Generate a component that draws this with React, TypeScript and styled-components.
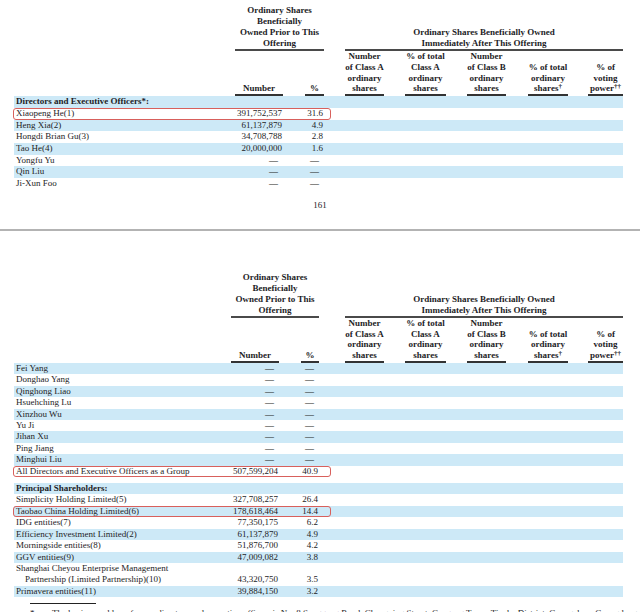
import React from 'react';
import styled, {createGlobalStyle} from 'styled-components';

const GlobalStyle = createGlobalStyle`
    html, body {
        margin: 0;
        padding: 0;
        background: #fff;
    }
    body {
        font-family: "Liberation Serif", "Times New Roman", serif;
        color: #1d1d26;
    }
`;

const Page = styled.div`
    width: 640px;
    height: 612px;
    overflow: hidden;
    display: flex;
    flex-direction: column;
`;

const Sheet = styled.section<{ $padTop: number }>`
    padding: ${({$padTop}) => $padTop}px 0 0 14px;
`;

const Table = styled.table`
    width: 609px;
    table-layout: fixed;
    border-collapse: separate;
    border-spacing: 0;
    font-size: 9px;
`;

const GroupHead = styled.th`
    font-weight: bold;
    text-align: center;
    vertical-align: bottom;
    line-height: 11px;
    padding: 0;
    white-space: nowrap;
    border-bottom: 2px solid #4a4a4a;
`;

const ColHead = styled.th<{ $underline?: boolean }>`
    font-weight: bold;
    text-align: center;
    vertical-align: bottom;
    line-height: 10.8px;
    padding: 0;
    white-space: nowrap;
    border-bottom: ${({$underline}) => ($underline ? '2px solid #333' : '2px solid transparent')};
`;

const Dagger = styled.sup`
    font-size: 7px;
    line-height: 0;
    vertical-align: 3px;
`;

const Row = styled.tr<{ $shade?: boolean; $h: number }>`
    background: ${({$shade}) => ($shade ? '#cde9f7' : 'transparent')};
    line-height: ${({$h}) => $h}px;
`;

const Spacer = styled.tr`
    height: 6px;
`;

const Name = styled.td<{ $bold?: boolean }>`
    position: relative;
    padding: 0 0 0 2px;
    font-weight: ${({$bold}) => ($bold ? 'bold' : 'normal')};
    white-space: nowrap;
    vertical-align: bottom;
`;

const Indent = styled.span`
    padding-left: 9px;
`;

const Num = styled.td<{ $dash?: boolean }>`
    padding: 0 ${({$dash}) => ($dash ? 5 : 1)}px 0 0;
    text-align: right;
    white-space: nowrap;
    vertical-align: bottom;
`;

const Cell = styled.td`
    padding: 0;
`;

const Highlight = styled.span`
    position: absolute;
    left: -1px;
    top: 0;
    bottom: 0;
    width: 318px;
    box-sizing: border-box;
    border: 1px solid #d8605c;
    border-radius: 3px;
    pointer-events: none;
`;

const PageNum = styled.div`
    margin-top: 10px;
    text-align: center;
    font-size: 9px;
    line-height: 11px;
`;

const PageBreak = styled.div`
    margin-top: 18px;
    border-top: 2px solid #b3b3b3;
`;

const FootRule = styled.div`
    width: 66px;
    margin: 6px 0 0 16px;
    border-top: 1px solid #222;
`;

const Footnote = styled.p`
    margin: 4px 0 0 16px;
    font-size: 9px;
    line-height: 11px;
    white-space: nowrap;
`;

const Star = styled.span`
    display: inline-block;
    width: 22px;
`;

type Line = {
    name: string;
    second?: string;
    num?: string;
    pct?: string;
    bold?: boolean;
    shade?: boolean;
    box?: boolean;
    spacer?: boolean;
};

const DASH = '\u2014';

const topCols = [218, 3, 48, 22, 19, 21, 39, 21, 41, 21, 39, 22, 40, 20, 35];
const bottomCols = [214, 3, 48, 22, 18, 26, 39, 21, 41, 21, 39, 22, 40, 20, 35];

const topRows: Line[] = [
    {name: 'Directors and Executive Officers*:', bold: true, shade: true},
    {name: 'Xiaopeng He(1)', num: '391,752,537', pct: '31.6', box: true},
    {name: 'Heng Xia(2)', num: '61,137,879', pct: '4.9', shade: true},
    {name: 'Hongdi Brian Gu(3)', num: '34,708,788', pct: '2.8'},
    {name: 'Tao He(4)', num: '20,000,000', pct: '1.6', shade: true},
    {name: 'Yongfu Yu', num: DASH, pct: DASH},
    {name: 'Qin Liu', num: DASH, pct: DASH, shade: true},
    {name: 'Ji-Xun Foo', num: DASH, pct: DASH},
];

const bottomRows: Line[] = [
    {name: 'Fei Yang', num: DASH, pct: DASH, shade: true},
    {name: 'Donghao Yang', num: DASH, pct: DASH},
    {name: 'Qinghong Liao', num: DASH, pct: DASH, shade: true},
    {name: 'Hsuehching Lu', num: DASH, pct: DASH},
    {name: 'Xinzhou Wu', num: DASH, pct: DASH, shade: true},
    {name: 'Yu Ji', num: DASH, pct: DASH},
    {name: 'Jihan Xu', num: DASH, pct: DASH, shade: true},
    {name: 'Ping Jiang', num: DASH, pct: DASH},
    {name: 'Minghui Liu', num: DASH, pct: DASH, shade: true},
    {name: 'All Directors and Executive Officers as a Group', num: '507,599,204', pct: '40.9', box: true},
    {name: '', spacer: true},
    {name: 'Principal Shareholders:', bold: true, shade: true},
    {name: 'Simplicity Holding Limited(5)', num: '327,708,257', pct: '26.4'},
    {name: 'Taobao China Holding Limited(6)', num: '178,618,464', pct: '14.4', shade: true, box: true},
    {name: 'IDG entities(7)', num: '77,350,175', pct: '6.2'},
    {name: 'Efficiency Investment Limited(2)', num: '61,137,879', pct: '4.9', shade: true},
    {name: 'Morningside entities(8)', num: '51,876,700', pct: '4.2'},
    {name: 'GGV entities(9)', num: '47,009,082', pct: '3.8', shade: true},
    {
        name: 'Shanghai Cheyou Enterprise Management',
        second: 'Partnership (Limited Partnership)(10)',
        num: '43,320,750',
        pct: '3.5',
    },
    {name: 'Primavera entities(11)', num: '39,884,150', pct: '3.2', shade: true},
];

const afterHeads = [
    <>Number<br/>of Class A<br/>ordinary<br/>shares</>,
    <>% of total<br/>Class A<br/>ordinary<br/>shares</>,
    <>Number<br/>of Class B<br/>ordinary<br/>shares</>,
    <>% of total<br/>ordinary<br/>shares<Dagger>{'\u2020'}</Dagger></>,
    <>% of<br/>voting<br/>power<Dagger>{'\u2020\u2020'}</Dagger></>,
];

const HoldingsTable: React.FC<{ cols: number[]; rows: Line[]; rowH: number }> = ({cols, rows, rowH}) => (
    <Table>
        <colgroup>
            {cols.map((w, i) => <col key={i} style={{width: w}}/>)}
        </colgroup>
        <thead>
            <tr>
                <Cell colSpan={2}/>
                <GroupHead colSpan={3}>
                    Ordinary Shares<br/>Beneficially<br/>Owned Prior to This<br/>Offering
                </GroupHead>
                <Cell/>
                <GroupHead colSpan={9}>
                    Ordinary Shares Beneficially Owned<br/>Immediately After This Offering
                </GroupHead>
            </tr>
            <tr>
                <Cell colSpan={2}/>
                <ColHead $underline>Number</ColHead>
                <Cell/>
                <ColHead $underline>%</ColHead>
                {afterHeads.map((h, i) => (
                    <React.Fragment key={i}>
                        <Cell/>
                        <ColHead $underline>{h}</ColHead>
                    </React.Fragment>
                ))}
            </tr>
        </thead>
        <tbody>
            {rows.map((r, i) => {
                if (r.spacer) {
                    return <Spacer key={i}><Cell colSpan={15}/></Spacer>;
                }
                const dash = r.num === DASH;
                return (
                    <Row key={i} $shade={r.shade} $h={rowH}>
                        <Name $bold={r.bold}>
                            {r.name}
                            {r.second && <><br/><Indent>{r.second}</Indent></>}
                            {r.box && <Highlight/>}
                        </Name>
                        <Cell/>
                        <Num $dash={dash}>{r.num}</Num>
                        <Cell/>
                        <Num $dash={dash}>{r.pct}</Num>
                        <Cell colSpan={10}/>
                    </Row>
                );
            })}
        </tbody>
    </Table>
);

const App: React.FC = () => (
    <>
        <GlobalStyle/>
        <Page>
            <Sheet $padTop={5}>
                <HoldingsTable cols={topCols} rows={topRows} rowH={11.7}/>
            </Sheet>
            <PageNum>161</PageNum>
            <PageBreak/>
            <Sheet $padTop={41}>
                <HoldingsTable cols={bottomCols} rows={bottomRows} rowH={11.4}/>
                <FootRule/>
                <Footnote>
                    <Star>*</Star>
                    The business address for our directors and executive officers is No. 8 Songgang Road,
                    Changxing Street, Cengang Town, Tianhe District, Guangzhou, Guangdong
                </Footnote>
            </Sheet>
        </Page>
    </>
);

export default App;
